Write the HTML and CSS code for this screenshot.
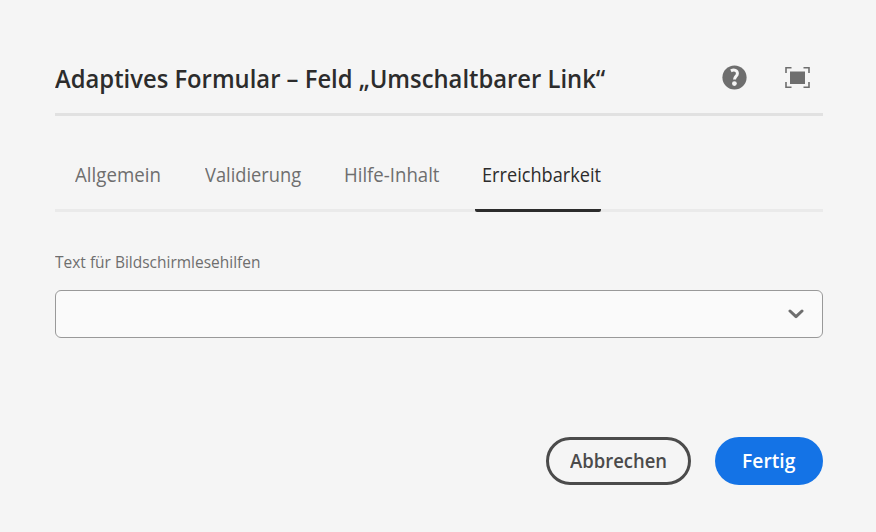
FILE: index.html
```html
<!DOCTYPE html>
<html lang="de">
<head>
<meta charset="utf-8">
<title>Adaptives Formular</title>
<link rel="stylesheet" href="styles.css">
</head>
<body>
<main class="dialog">
  <header class="header">
    <h1 class="title"><span class="fit">Adaptives Formular – Feld „Umschaltbarer Link“</span></h1>
    <div class="actions">
      <button class="icon" aria-label="Hilfe"><svg width="26" height="26" viewBox="0 0 26 26"><circle cx="12.5" cy="12.5" r="12.1" fill="#6e6e6e"/><path d="M8.9 5.9C12.2 4.2 15.4 5.5 15.4 8.4C15.4 11.2 12.5 11.5 12.5 14.6" fill="none" stroke="#f5f5f5" stroke-width="3"/><circle cx="12.4" cy="18.6" r="2.4" fill="#f5f5f5"/></svg></button>
      <button class="icon" aria-label="Vollbild"><svg width="26" height="22" viewBox="0 0 26 22"><path d="M1 6V.8H6.5M18.5 .8H24V6M24 15V20.2H18.5M6.5 20.2H1V15" fill="none" stroke="#6e6e6e" stroke-width="1.6"/><path d="M5 4.5h15v12.5H5z" fill="#6e6e6e"/></svg></button>
    </div>
  </header>
  <nav class="tabs">
    <a class="tab general"><span class="fit">Allgemein</span></a>
    <a class="tab validation"><span class="fit">Validierung</span></a>
    <a class="tab help"><span class="fit">Hilfe-Inhalt</span></a>
    <a class="tab access active"><span class="fit">Erreichbarkeit</span></a>
  </nav>
  <label class="label"><span class="fit">Text für Bildschirmlesehilfen</span></label>
  <div class="select"><svg width="16" height="10" viewBox="0 0 16 10"><path d="M2 2L8 7.7L14 2" fill="none" stroke="#6e6e6e" stroke-width="3" stroke-linecap="round" stroke-linejoin="round"/></svg></div>
  <footer class="footer">
    <button class="button cancel"><span class="fit">Abbrechen</span></button>
    <button class="button done"><span class="fit">Fertig</span></button>
  </footer>
</main>
</body>
</html>
```
FILE: styles.css
```css
* { box-sizing: border-box; }
body { margin: 0; background: #f5f5f5; font-family: "Open Sans", "Noto Sans", sans-serif; font-stretch: 90%; color: #6e6e6e; }
.dialog { width: 876px; height: 532px; padding: 43px 53px 0 55px; }
.fit { display: inline-block; transform: scaleX(var(--fit)); transform-origin: left; }
.header { display: flex; justify-content: space-between; align-items: center; height: 73px; border-bottom: 3px solid #e1e1e1; }
.title { --fit: .952; margin: 0; width: 560px; font-size: 25px; line-height: 34px; font-weight: 600; color: #2c2c2c; white-space: nowrap; }
.actions { display: flex; align-items: center; gap: 37px; padding-right: 12px; }
.icon { border: 0; padding: 0; background: none; display: flex; }
.tabs { display: flex; height: 96px; border-bottom: 3px solid #eaeaea; font-size: 20px; line-height: 28px; white-space: nowrap; }
.tab { height: 96px; padding-top: 45px; }
.general { --fit: .935; margin-left: 20px; width: 130px; }
.validation { --fit: .913; width: 139px; }
.help { --fit: .93; width: 131px; }
.access { --fit: .908; width: 126px; padding-left: 7px; border-bottom: 3px solid #2c2c2c; border-radius: 2px; color: #2c2c2c; }
.label { --fit: .911; display: block; margin-top: 38px; font-size: 17px; line-height: 24px; height: 40px; }
.select { display: flex; justify-content: flex-end; align-items: center; height: 48px; padding-right: 18px; border: 1px solid #999; border-radius: 6px; background: #fafafa; }
.footer { display: flex; justify-content: flex-end; gap: 24px; margin-top: 99px; }
.button { height: 48px; padding: 0 0 2px; border-radius: 24px; font: inherit; font-size: 20px; font-weight: 600; white-space: nowrap; }
.button .fit { transform-origin: center; }
.cancel { --fit: .923; width: 145px; border: 3px solid #4b4b4b; background: transparent; color: #4b4b4b; }
.done { --fit: .96; width: 108px; border: 0; background: #1473e6; color: #fff; }
```
